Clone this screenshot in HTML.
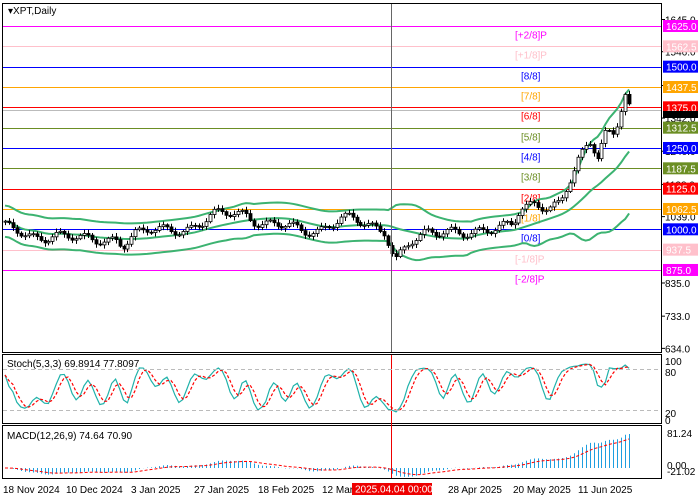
<!DOCTYPE html>
<html><head><meta charset="utf-8"><style>
html,body{margin:0;padding:0;background:#fff;width:700px;height:500px;overflow:hidden;font-family:"Liberation Sans",sans-serif}
svg{display:block}
text{font-family:"Liberation Sans",sans-serif;font-size:10px}
</style></head><body>
<svg id="s" width="700" height="500" xmlns="http://www.w3.org/2000/svg">
<rect width="700" height="500" fill="#fff"/>
<g id="lv"></g>
<g id="bb"></g>
<g id="cd"></g>
<g id="st"></g>
<g id="mc"></g>
<rect x="2.5" y="3.5" width="659" height="349" fill="none" stroke="#000"/>
<rect x="2.5" y="354.5" width="659" height="69" fill="none" stroke="#000"/>
<rect x="2.5" y="425.5" width="659" height="53" fill="none" stroke="#000"/>
<line x1="391.5" y1="4" x2="391.5" y2="352" stroke="#666"/>
<line x1="391.5" y1="355" x2="391.5" y2="478" stroke="#e00"/>
<line x1="3" y1="369.5" x2="661" y2="369.5" stroke="#bbb" stroke-dasharray="4,3"/>
<line x1="3" y1="410.5" x2="661" y2="410.5" stroke="#bbb" stroke-dasharray="4,3"/>
<text x="8" y="14" fill="#000">▾XPT,Daily</text>
<text x="7" y="367" font-size="9.5">Stoch(5,3,3) 69.8914 77.8097</text>
<text x="7" y="439" font-size="9.5">MACD(12,26,9) 74.64 70.90</text>
<g id="ax" font-size="10"></g>
<g font-size="10" fill="#000">
<text x="3" y="493">18 Nov 2024</text>
<text x="66" y="493">10 Dec 2024</text>
<text x="131" y="493">3 Jan 2025</text>
<text x="194" y="493">27 Jan 2025</text>
<text x="258" y="493">18 Feb 2025</text>
<text x="322" y="493">12 Mar</text>
<text x="448" y="493">28 Apr 2025</text>
<text x="513" y="493">20 May 2025</text>
<text x="578" y="493">11 Jun 2025</text>
</g>
<rect x="352" y="483" width="80" height="12" fill="#e00"/>
<text x="355" y="492.5" fill="#fff">2025.04.04 00:00</text>
</svg>
<script>
var NS="http://www.w3.org/2000/svg";
function el(p,t,a,txt){var e=document.createElementNS(NS,t);for(var k in a)e.setAttribute(k,a[k]);if(txt!=null)e.textContent=txt;document.getElementById(p).appendChild(e);return e;}
function Y(p){return 26+(1625-p)*0.3253;}
var lv=[[1625,"#ff00ff","[+2/8]P",1],[1562.5,"#ffc0cb","[+1/8]P",1],[1500,"#0000ff","[8/8]",0],[1437.5,"#ffa500","[7/8]",0],[1375,"#ff0000","[6/8]",0],[1312.5,"#6b8e23","[5/8]",0],[1250,"#0000ff","[4/8]",0],[1187.5,"#6b8e23","[3/8]",0],[1125,"#ff0000","[2/8]",0],[1062.5,"#ffa500","[1/8]",0],[1000,"#0000ff","[0/8]",0],[937.5,"#ffc0cb","[-1/8]P",1],[875,"#ff00ff","[-2/8]P",1]];
lv.forEach(function(l){var y=Math.round(Y(l[0]))+0.5;el("lv","line",{x1:3,y1:y,x2:661,y2:y,stroke:l[1],"stroke-width":1});
el("lv","text",{x:l[3]?515:521,y:y+12,fill:l[1],"font-size":"11"},l[2]);});
el("lv","line",{x1:3,y1:110.5,x2:661,y2:110.5,stroke:"#bbb"});
[[1645,"1645.0"],[1546,"1546.0"],[1442,"1442.0"],[1342,"1342.0"],[1240,"1240.0"],[1138,"1138.0"],[1039,"1039.0"],[835,"835.0"],[733,"733.0"],[634,"634.0"]].forEach(function(t){var y=Y(t[0]);el("ax","text",{x:665,y:y+4},t[1]);el("ax","line",{x1:661,y1:y,x2:665,y2:y,stroke:"#000"});});
lv.forEach(function(l){var y=Y(l[0]);el("ax","rect",{x:663,y:y-6,width:35,height:12,fill:l[1]});el("ax","text",{x:666,y:y+4,fill:"#fff"},l[0].toFixed(1));});
el("ax","rect",{x:663,y:111,width:35,height:7,fill:"#000"});
[[361,"100"],[372,"80"],[413,"20"],[420,"0"]].forEach(function(t){el("ax","text",{x:665,y:t[0]+4},t[1]);});
el("ax","text",{x:667,y:437},"81.24");el("ax","text",{x:667,y:469},"0.00");el("ax","text",{x:667,y:475},"-21.02");
var K=[[5,1000],[20,995],[35,980],[60,975],[90,972],[115,965],[122,950],[135,985],[150,1000],[170,995],[190,1005],[212,1040],[245,1050],[260,1025],[275,1010],[300,995],[320,1005],[340,1030],[360,1020],[385,1000],[395,905],[410,960],[425,985],[450,995],[470,990],[495,1000],[512,1010],[520,1065],[535,1085],[550,1070],[560,1070],[568,1130],[578,1210],[590,1270],[598,1240],[606,1310],[614,1290],[620,1340],[624,1425],[628,1390],[634,1335]];
function P(x){for(var i=0;i<K.length-1;i++){if(x<=K[i+1][0]){var t=(x-K[i][0])/(K[i+1][0]-K[i][0]);return K[i][1]+t*(K[i+1][1]-K[i][1]);}}return K[K.length-1][1];}
var bars=[];for(var x=5;x<=633;x+=3.95){var f=x>600?0.4:1;var n=(Math.sin(x*0.24)*14+Math.sin(x*0.09+1)*8+Math.sin(x*1.7)*5)*f;bars.push({x:x,c:P(x)+n});}
for(var i=0;i<bars.length;i++){var b=bars[i];b.o=i?bars[i-1].c:b.c;b.h=Math.max(b.o,b.c)+4+Math.abs(Math.sin(i*2.3))*8;b.l=Math.min(b.o,b.c)-4-Math.abs(Math.cos(i*1.9))*8;}
bars.forEach(function(b){var x=Math.round(b.x)+0.5;el("cd","line",{x1:x,y1:Y(b.h),x2:x,y2:Y(b.l),stroke:"#000"});var t=Y(Math.max(b.o,b.c)),h=Math.max(1,Math.abs(Y(b.o)-Y(b.c)));el("cd","rect",{x:x-1.5,y:t,width:3,height:h,fill:b.c>=b.o?"#fff":"#000",stroke:"#000","stroke-width":0.8});});
var N=20,up=[],md=[],lo=[];
for(var i=0;i<bars.length;i++){var s=0,c=0;for(var j=Math.max(0,i-N+1);j<=i;j++){s+=bars[j].c;c++;}var m=s/c,v=0;for(var j=Math.max(0,i-N+1);j<=i;j++)v+=(bars[j].c-m)*(bars[j].c-m);var sd=Math.sqrt(v/c);sd=Math.max(sd,24);var x=bars[i].x;md.push(x+","+Y(m));up.push(x+","+Y(m+2*sd));lo.push(x+","+Y(m-2*sd));}
[up,md,lo].forEach(function(a){el("bb","polyline",{points:a.join(" "),fill:"none",stroke:"#3cb371","stroke-width":2});});
var k=[];
for(var i=0;i<bars.length;i++){var hh=-1e9,ll=1e9;for(var j=Math.max(0,i-4);j<=i;j++){hh=Math.max(hh,bars[j].h);ll=Math.min(ll,bars[j].l);}k.push((bars[i].c-ll)/(hh-ll)*100);}
var ks=k.map(function(v,i){var s=0,c=0;for(var j=Math.max(0,i-2);j<=i;j++){s+=k[j];c++;}return s/c;});
var ds=ks.map(function(v,i){var s=0,c=0;for(var j=Math.max(0,i-2);j<=i;j++){s+=ks[j];c++;}return s/c;});
function SY(v){return 417-v*0.56;}
el("st","polyline",{points:bars.map(function(b,i){return b.x+","+SY(ks[i]);}).join(" "),fill:"none",stroke:"#20b2aa","stroke-width":1.2});
el("st","polyline",{points:bars.map(function(b,i){return b.x+","+SY(ds[i]);}).join(" "),fill:"none",stroke:"#f00","stroke-width":1.2,"stroke-dasharray":"3,2"});
var e12=bars[0].c,e26=bars[0].c,sig=0,ma=[],sg=[];
bars.forEach(function(b){e12+=(b.c-e12)*2/13;e26+=(b.c-e26)*2/27;var m=e12-e26;sig+=(m-sig)*2/10;ma.push(m);sg.push(sig);});
var mx=Math.max.apply(null,ma);var sc=34/mx;
function MY(v){return 468-v*sc;}
bars.forEach(function(b,i){var x=Math.round(b.x)+0.5;el("mc","line",{x1:x,y1:MY(0),x2:x,y2:MY(ma[i]),stroke:"#1e9fe0","stroke-width":1});});
el("mc","polyline",{points:bars.map(function(b,i){return b.x+","+MY(sg[i]);}).join(" "),fill:"none",stroke:"#f00","stroke-width":1,"stroke-dasharray":"3,2"});
</script>
</body></html>
